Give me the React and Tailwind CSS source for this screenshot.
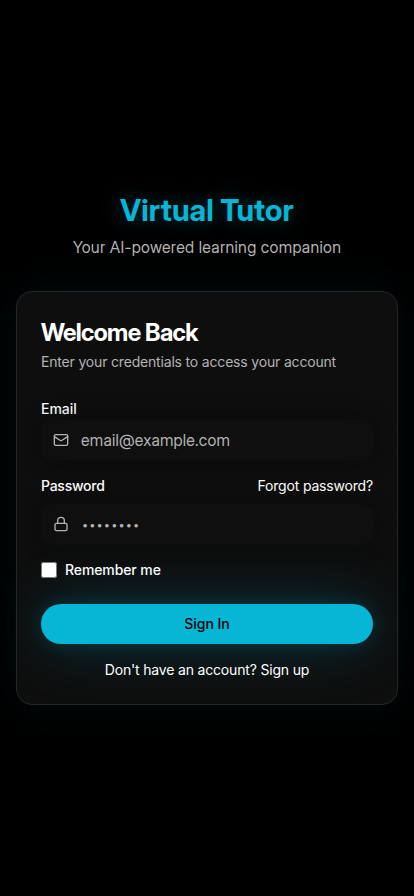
import { Mail, Lock } from "lucide-react";

function Field({ icon: Icon, id, type, placeholder, placeholderClass }) {
  return (
    <div className="relative">
      <Icon className="absolute left-3 top-3 size-4 text-[#b3b3b3]" strokeWidth={2} />
      <input
        id={id}
        type={type}
        placeholder={placeholder}
        className={"block h-10 w-full rounded-xl bg-[#0f0f0f] pr-3 text-white shadow-[0_0_20px_rgba(0,8,8,0.4)] outline-none placeholder:text-[#b3b3b3] " + placeholderClass}
      />
    </div>
  );
}

export default function App() {
  return (
    <main className="flex min-h-screen items-center justify-center bg-black p-4 font-['Inter',sans-serif] tracking-[-0.18px] text-white">
      <div className="w-full max-w-md">
        <header className="mb-8 text-center">
          <h1 className="mb-[7px] pt-px font-['Inter_Display',Inter,sans-serif] text-3xl leading-9 font-bold tracking-[0.12px] text-[#06b6d4] [text-shadow:0_0_20px_rgba(6,182,212,0.4)]">Virtual Tutor</h1>
          <p className="font-['Inter_Display',Inter,sans-serif] text-base tracking-[0.32px] text-[#b3b3b3]">Your AI-powered learning companion</p>
        </header>
        <section className="rounded-2xl border border-[#262626] bg-[#0e0e0e] shadow-[0_0_40px_rgba(6,182,212,0.07)]">
          <div className="px-6 pt-[25px] pb-6">
            <h2 className="font-['Inter_Display',Inter,sans-serif] text-2xl font-bold tracking-[-0.62px]">Welcome Back</h2>
            <p className="mt-[3px] text-sm text-[#b3b3b3]">Enter your credentials to access your account</p>
          </div>
          <form className="px-6 pb-6">
            <label htmlFor="email" className="text-sm font-medium tracking-[-0.05px]">Email</label>
            <Field icon={Mail} id="email" type="email" placeholder="email@example.com" placeholderClass="pl-10 font-['Inter_Display',Inter,sans-serif] text-base tracking-[0.22px]" />
            <div className="mt-4 mb-2 flex items-center justify-between text-sm">
              <label htmlFor="password" className="font-medium tracking-[-0.25px]">Password</label>
              <a href="#">Forgot password?</a>
            </div>
            <Field icon={Lock} id="password" type="password" placeholder="••••••••" placeholderClass="pt-0.5 pl-[41px] text-[11px] tracking-[1.1px]" />
            <div className="mt-4 flex items-center gap-2">
              <input id="remember" type="checkbox" className="size-4" />
              <label htmlFor="remember" className="text-sm font-medium tracking-[-0.1px]">Remember me</label>
            </div>
            <button type="button" className="mt-6 h-10 w-full rounded-full bg-[#06b6d4] text-sm font-medium text-black tracking-[-0.05px] shadow-[0_0_20px_rgba(6,182,212,0.18),0_0_60px_rgba(6,182,212,0.22)]">Sign In</button>
            <p className="mt-4 text-center text-sm">Don't have an account? <a href="#">Sign up</a></p>
          </form>
        </section>
      </div>
    </main>
  );
}
